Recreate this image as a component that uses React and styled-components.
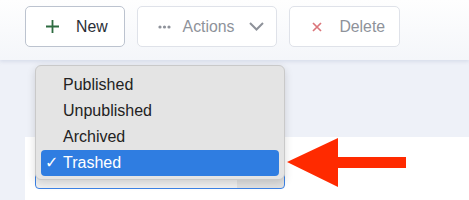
import React from "react";
import styled, { createGlobalStyle } from "styled-components";

const Global = createGlobalStyle`
  body {
    margin: 0;
    background: #eef1f8;
    font-family: "Liberation Sans", Arial, sans-serif;
  }
`;

const Page = styled.div`
  position: relative;
  width: 469px;
  height: 200px;
  overflow: hidden;
  background: #eef1f8;
`;

const Toolbar = styled.div`
  height: 60px;
  box-sizing: border-box;
  padding: 6px 25px 0;
  display: flex;
  gap: 12px;
  align-items: flex-start;
  background: linear-gradient(#fefefe, #f4f6fa);
  box-shadow: 0 2px 3px rgba(200, 208, 225, 0.5);
`;

const Button = styled.button`
  height: 41px;
  box-sizing: border-box;
  display: flex;
  align-items: center;
  gap: ${(p) => p.$gap || 12}px;
  padding: 0 ${(p) => p.$pr || 16}px 0 ${(p) => p.$pl || 20}px;
  background: #fff;
  border: 1px solid ${(p) => (p.$primary ? "#bcc3cf" : "#dfe2e9")};
  border-radius: 5px;
  font-family: inherit;
  font-size: 15.8px;
  color: ${(p) => (p.$primary ? "#2a2e36" : "#8e929a")};
`;

const Card = styled.div`
  margin: 77px 0 0 25px;
  height: 80px;
  background: #fff;
  padding: 13px 0 0 10px;
  box-sizing: border-box;
`;

const Select = styled.div`
  width: 250px;
  height: 39px;
  box-sizing: border-box;
  border: 1px solid #3b82e6;
  border-radius: 4px;
  background: linear-gradient(90deg, #f1f1f1 81%, #e2e2e2 81%);
`;

const Menu = styled.div`
  position: absolute;
  left: 35px;
  top: 65px;
  width: 250px;
  height: 115px;
  box-sizing: border-box;
  padding: 6px 5px 5px;
  background: #e4e4e4;
  border: 1px solid #c9c9c9;
  border-radius: 6px;
  box-shadow: 0 3px 8px rgba(0, 0, 0, 0.15);
`;

const Item = styled.div`
  height: 26px;
  display: flex;
  align-items: center;
  padding-left: 22px;
  position: relative;
  border-radius: 4px;
  font-size: 16px;
  color: ${(p) => (p.$active ? "#fff" : "#222")};
  background: ${(p) => (p.$active ? "#2f7de1" : "transparent")};
`;

const Check = styled.span`
  position: absolute;
  left: 4px;
  top: 3px;
  font-family: "DejaVu Sans", sans-serif;
  font-size: 16px;
  font-weight: bold;
`;

const Arrow = styled.svg`
  position: absolute;
  left: 285px;
  top: 135px;
`;

export default function App() {
  return (
    <Page>
      <Global />
      <Toolbar>
        <Button $primary $gap={17} $pr={16}>
          <svg width="13" height="13" viewBox="0 0 13 13">
            <path d="M6.5 0v13M0 6.5h13" stroke="#2d6b40" strokeWidth="1.8" />
          </svg>
          New
        </Button>
        <Button $gap={12} $pr={12}>
          <svg width="13" height="4" viewBox="0 0 13 4">
            <circle cx="2" cy="2" r="1.6" fill="#8e929a" />
            <circle cx="6.5" cy="2" r="1.6" fill="#8e929a" />
            <circle cx="11" cy="2" r="1.6" fill="#8e929a" />
          </svg>
          Actions
          <svg width="15" height="9" viewBox="0 0 15 9" style={{ marginLeft: 3 }}>
            <path d="M1 1l6.5 6.5L14 1" fill="none" stroke="#8e929a" strokeWidth="2" />
          </svg>
        </Button>
        <Button $gap={17} $pl={22} $pr={14}>
          <svg width="10" height="10" viewBox="0 0 10 10">
            <path d="M1 1l8 8M9 1l-8 8" stroke="#db767b" strokeWidth="1.7" />
          </svg>
          Delete
        </Button>
      </Toolbar>
      <Card>
        <Select />
      </Card>
      <Menu>
        <Item>Published</Item>
        <Item>Unpublished</Item>
        <Item>Archived</Item>
        <Item $active>
          <Check>✓</Check>
          Trashed
        </Item>
      </Menu>
      <Arrow width="125" height="55" viewBox="0 0 125 55">
        <polygon points="2,27 53,3 53,22 121,22 121,33 53,33 53,52" fill="#ff2a00" />
      </Arrow>
    </Page>
  );
}
